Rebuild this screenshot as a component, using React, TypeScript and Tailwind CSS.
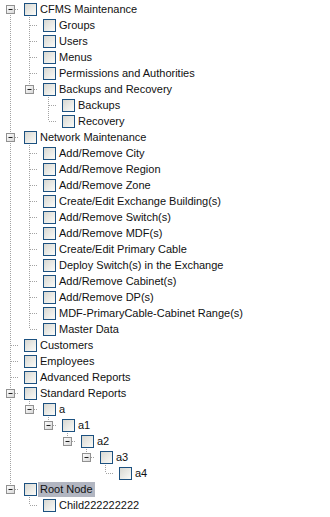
type Node = {
  label: string
  selected?: boolean
  children?: Node[]
}

const leaf = (label: string): Node => ({ label })

const tree: Node[] = [
  {
    label: "CFMS Maintenance",
    children: [
      leaf("Groups"),
      leaf("Users"),
      leaf("Menus"),
      leaf("Permissions and Authorities"),
      { label: "Backups and Recovery", children: [leaf("Backups"), leaf("Recovery")] },
    ],
  },
  {
    label: "Network Maintenance",
    children: [
      leaf("Add/Remove City"),
      leaf("Add/Remove Region"),
      leaf("Add/Remove Zone"),
      leaf("Create/Edit Exchange Building(s)"),
      leaf("Add/Remove Switch(s)"),
      leaf("Add/Remove MDF(s)"),
      leaf("Create/Edit Primary Cable"),
      leaf("Deploy Switch(s) in the Exchange"),
      leaf("Add/Remove Cabinet(s)"),
      leaf("Add/Remove DP(s)"),
      leaf("MDF-PrimaryCable-Cabinet Range(s)"),
      leaf("Master Data"),
    ],
  },
  leaf("Customers"),
  leaf("Employees"),
  leaf("Advanced Reports"),
  {
    label: "Standard Reports",
    children: [
      {
        label: "a",
        children: [{ label: "a1", children: [{ label: "a2", children: [{ label: "a3", children: [leaf("a4")] }] }] }],
      },
    ],
  },
  { label: "Root Node", selected: true, children: [leaf("Child222222222")] },
]

type Row = {
  node: Node
  guides: boolean[]
  first: boolean
  last: boolean
}

function flatten(nodes: Node[], guides: boolean[], rows: Row[]) {
  nodes.forEach((node, i) => {
    const last = i === nodes.length - 1
    rows.push({ node, guides, first: guides.length === 0 && i === 0, last })
    if (node.children) flatten(node.children, [...guides, !last], rows)
  })
  return rows
}

const LINE = "#a3a3a3"

// indentation column: just the dotted guide when an ancestor has more siblings
function Guide({ on }: { on: boolean }) {
  return (
    <svg width="19" height="16" className="shrink-0">
      {on && <line x1="10.5" y1="0" x2="10.5" y2="16" stroke={LINE} strokeDasharray="1 1" />}
    </svg>
  )
}

// connector column: elbow lines plus the minus box for expanded nodes
function Connector({ first, last, open }: { first: boolean; last: boolean; open: boolean }) {
  return (
    <svg width="19" height="16" className="shrink-0">
      <line x1="10.5" y1={first ? 8 : 0} x2="10.5" y2={last ? 8 : 16} stroke={LINE} strokeDasharray="1 1" />
      <line x1="11" y1="8.5" x2="24" y2="8.5" stroke={LINE} strokeDasharray="1 1" />
      {open && (
        <>
          <defs>
            <linearGradient id="exp" x1="0" y1="0" x2="1" y2="1">
              <stop offset="0" stopColor="#ffffff" />
              <stop offset="1" stopColor="#d6d6d6" />
            </linearGradient>
          </defs>
          <rect x="6.5" y="4.5" width="8" height="8" fill="url(#exp)" stroke="#919191" />
          <line x1="8.5" y1="8.5" x2="12.5" y2="8.5" stroke="#1e1e1e" />
        </>
      )}
    </svg>
  )
}

function TreeRow({ row }: { row: Row }) {
  const { node, guides, first, last } = row
  return (
    <div className="flex h-4 items-center">
      {guides.map((g, i) => (
        <Guide key={i} on={g} />
      ))}
      <Connector first={first} last={last} open={!!node.children} />
      <div className="ml-[5px] size-[13px] shrink-0 border border-[#1c5180] bg-linear-to-br from-[#d8d8d2] to-[#fbfbf8]" />
      <span
        className={"ml-px whitespace-nowrap px-[2px] leading-[15px] " + (node.selected ? "bg-[#b2b6c1]" : "")}
      >
        {node.label}
      </span>
    </div>
  )
}

export default function App() {
  const rows = flatten(tree, [], [])
  return (
    <div
      className="min-h-[517px] w-[330px] bg-white pt-px text-[11px] text-[#111]"
      style={{ fontFamily: '"Liberation Sans", Arial, sans-serif' }}
    >
      {rows.map((row, i) => (
        <TreeRow key={i} row={row} />
      ))}
    </div>
  )
}
